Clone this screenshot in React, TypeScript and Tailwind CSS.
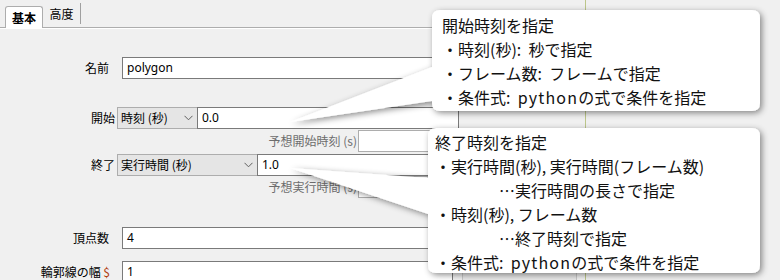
import React from "react";

const jp = "font-['Noto_Sans_CJK_JP',sans-serif]";
const ui = "font-['Noto_Sans','Noto_Sans_CJK_JP',sans-serif]";

function Chevron() {
  return (
    <svg width="9" height="6" viewBox="0 0 9 6" className="shrink-0">
      <polyline points="0.5,0.8 4.5,4.8 8.5,0.8" fill="none" stroke="#5f5f5f" strokeWidth="1" />
    </svg>
  );
}

function TextBox({ value, w, className = "" }: { value?: string; w: string; className?: string }) {
  return (
    <div className={`h-[22px] ${w} bg-white border border-[#7a7a7a] flex items-center pl-[4px] text-[12px] text-black ${ui} ${className}`}>
      {value}
    </div>
  );
}

function Combo({ label, w }: { label: string; w: string }) {
  return (
    <div className={`h-[22px] ${w} bg-[#e5e5e5] border border-[#adadad] flex items-center justify-between pl-[3px] pr-[4px] text-[12px] text-black ${jp}`}>
      <span>{label}</span>
      <Chevron />
    </div>
  );
}

function Py() {
  return <span className="tracking-[1.2px]">python</span>;
}

export default function App() {
  return (
    <div className={`relative w-[780px] h-[280px] overflow-hidden bg-[#f0f0f0] ${jp}`}>
      <div className="flex h-full">
        <div className="w-[586px] h-full border-r border-[#bcc68a] flex flex-col">
          {/* tab strip */}
          <div className="h-[28px] border-b border-[#adadad] flex items-end pl-[5px] shrink-0">
            <div className="h-[22px] -mb-px w-[38px] bg-white border border-b-0 border-[#adadad] rounded-t-[3px] flex items-center justify-center text-[12px] font-bold text-black">
              基本
            </div>
            <div className="h-[21px] mb-[3px] w-[38px] border-r border-[#a0a0a0] flex items-center justify-center text-[12px] text-black">
              高度
            </div>
          </div>
          {/* pane */}
          <div className="border-t border-white flex flex-col text-[12px] text-black">
            <div className="flex items-center mt-[28px]">
              <div className="w-[109px] text-right">名前</div>
              <TextBox value="polygon" w="w-[337px]" className="ml-[13px]" />
            </div>
            <div className="flex items-center mt-[28px]">
              <div className="w-[115px] text-right">開始</div>
              <div className="ml-[2px] flex">
                <Combo label="時刻 (秒)" w="w-[81px]" />
                <TextBox value="0.0" w="w-[262px]" className="-ml-px" />
              </div>
            </div>
            <div className="flex items-center mt-px">
              <div className="w-[357px] text-right text-[#6d6d6d]">予想開始時刻 (s)</div>
              <TextBox w="w-[101px]" className="ml-px border-[#adadad]" />
            </div>
            <div className="flex items-center mt-[2px]">
              <div className="w-[115px] text-right">終了</div>
              <div className="ml-[2px] flex">
                <Combo label="実行時間 (秒)" w="w-[141px]" />
                <TextBox value="1.0" w="w-[202px]" className="-ml-px" />
              </div>
            </div>
            <div className="flex items-center">
              <div className="w-[357px] text-right text-[#6d6d6d]">予想実行時間 (s)</div>
              <TextBox w="w-[101px]" className="ml-px border-[#adadad]" />
            </div>
            <div className="flex items-center mt-[29px]">
              <div className="w-[109px] text-right">頂点数</div>
              <TextBox value="4" w="w-[337px]" className="ml-[13px]" />
            </div>
            <div className="flex items-center mt-[12px]">
              <div className="w-[110px] text-right">
                輪郭線の幅 <span className="text-[#b04010]">$</span>
              </div>
              <TextBox value="1" w="w-[331px]" className="ml-[12px]" />
              <div className="ml-[9px] h-[22px] w-[115px] bg-[#e8e8e8] border border-[#c8c8c8]" />
            </div>
          </div>
        </div>
        <div className="flex-1" />
      </div>

      {/* callouts overlay */}
      <svg className="absolute left-0 top-0" width="780" height="280" viewBox="0 0 780 280">
        <defs>
          <filter id="sh" x="-10%" y="-20%" width="130%" height="150%">
            <feDropShadow dx="2" dy="2" stdDeviation="3" floodColor="#000" floodOpacity="0.45" />
          </filter>
        </defs>
        <path
          d="M 440 10 H 752 Q 760 10 760 18 V 103 Q 760 111 752 111 H 440 Q 432 111 432 103 V 101 L 290 122 L 432 67 V 18 Q 432 10 440 10 Z"
          fill="#fff"
          filter="url(#sh)"
        />
        <path
          d="M 436 128 H 752 Q 760 128 760 136 V 265 Q 760 273 752 273 H 436 Q 428 273 428 265 V 214 L 290 168 L 428 178 V 136 Q 428 128 436 128 Z"
          fill="#fff"
          filter="url(#sh)"
        />
      </svg>

      <div className={`absolute left-[442px] top-[13px] text-[16px] leading-[24px] text-[#111] whitespace-nowrap ${jp}`}>
        <div>開始時刻を指定</div>
        <div>・時刻(秒):&nbsp; 秒で指定</div>
        <div>・フレーム数:&nbsp; フレームで指定</div>
        <div>・条件式:&nbsp; <Py />の式で条件を指定</div>
      </div>

      <div className={`absolute left-[435px] top-[130px] text-[16px] leading-[24px] text-[#111] whitespace-nowrap ${jp}`}>
        <div>終了時刻を指定</div>
        <div>・実行時間(秒), 実行時間(フレーム数)</div>
        <div className="pl-[64px]">…実行時間の長さで指定</div>
        <div>・時刻(秒), フレーム数</div>
        <div className="pl-[64px]">…終了時刻で指定</div>
        <div>・条件式:&nbsp; <Py />の式で条件を指定</div>
      </div>
    </div>
  );
}
